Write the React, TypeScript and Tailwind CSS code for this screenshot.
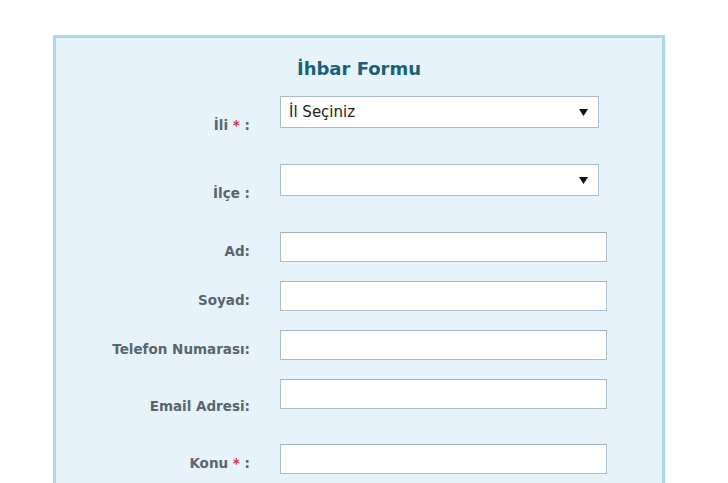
import React from 'react'

const font = { fontFamily: '"DejaVu Sans", Verdana, sans-serif' }

function Label({ text, required, mt }: { text: string; required?: boolean; mt: string }) {
  return (
    <div className={`w-[224px] shrink-0 pr-[30px] text-right text-[13.5px] font-bold leading-[16px] text-[#5a666e] ${mt}`}>
      {text}
      {required && (
        <>
          {' '}
          <span className="text-[#d8343c]">*</span> :
        </>
      )}
    </div>
  )
}

function SelectBox({ value }: { value?: string }) {
  return (
    <div className="flex h-[32px] w-[319px] shrink-0 items-center justify-between border border-[#a9c0c8] bg-white pl-[8px] pr-[10px] text-[15px] text-[#222]">
      <span>{value}</span>
      <svg width="9" height="7" viewBox="0 0 9 7">
        <path d="M0 0 H9 L4.5 7 Z" fill="#111" />
      </svg>
    </div>
  )
}

function TextBox() {
  return <div className="h-[30px] w-[327px] shrink-0 border border-[#a9c0c8] border-t-[#9fb6bf] bg-white" />
}

export default function App() {
  return (
    <div className="min-h-[483px] bg-white pt-[35px]" style={font}>
      <div className="ml-[53px] w-[612px] border-[3px] border-[#add8e6] bg-[#e6f3fb] pb-[40px]">
        <h1 className="pt-[21px] text-center text-[18px] font-bold leading-[20px] text-[#1b6078]">
          İhbar Formu
        </h1>

        <div className="mt-[17px] flex h-[32px]">
          <Label text="İli" required mt="mt-[21px]" />
          <SelectBox value="İl Seçiniz" />
        </div>

        <div className="mt-[36px] flex h-[32px]">
          <Label text="İlçe :" mt="mt-[21px]" />
          <SelectBox />
        </div>

        <div className="mt-[36px] flex h-[30px]">
          <Label text="Ad:" mt="mt-[11px]" />
          <TextBox />
        </div>

        <div className="mt-[19px] flex h-[30px]">
          <Label text="Soyad:" mt="mt-[11px]" />
          <TextBox />
        </div>

        <div className="mt-[19px] flex h-[30px]">
          <Label text="Telefon Numarası:" mt="mt-[11px]" />
          <TextBox />
        </div>

        <div className="mt-[19px] flex h-[30px]">
          <Label text="Email Adresi:" mt="mt-[19px]" />
          <TextBox />
        </div>

        <div className="mt-[35px] flex h-[30px]">
          <Label text="Konu" required mt="mt-[11px]" />
          <TextBox />
        </div>
      </div>
    </div>
  )
}
